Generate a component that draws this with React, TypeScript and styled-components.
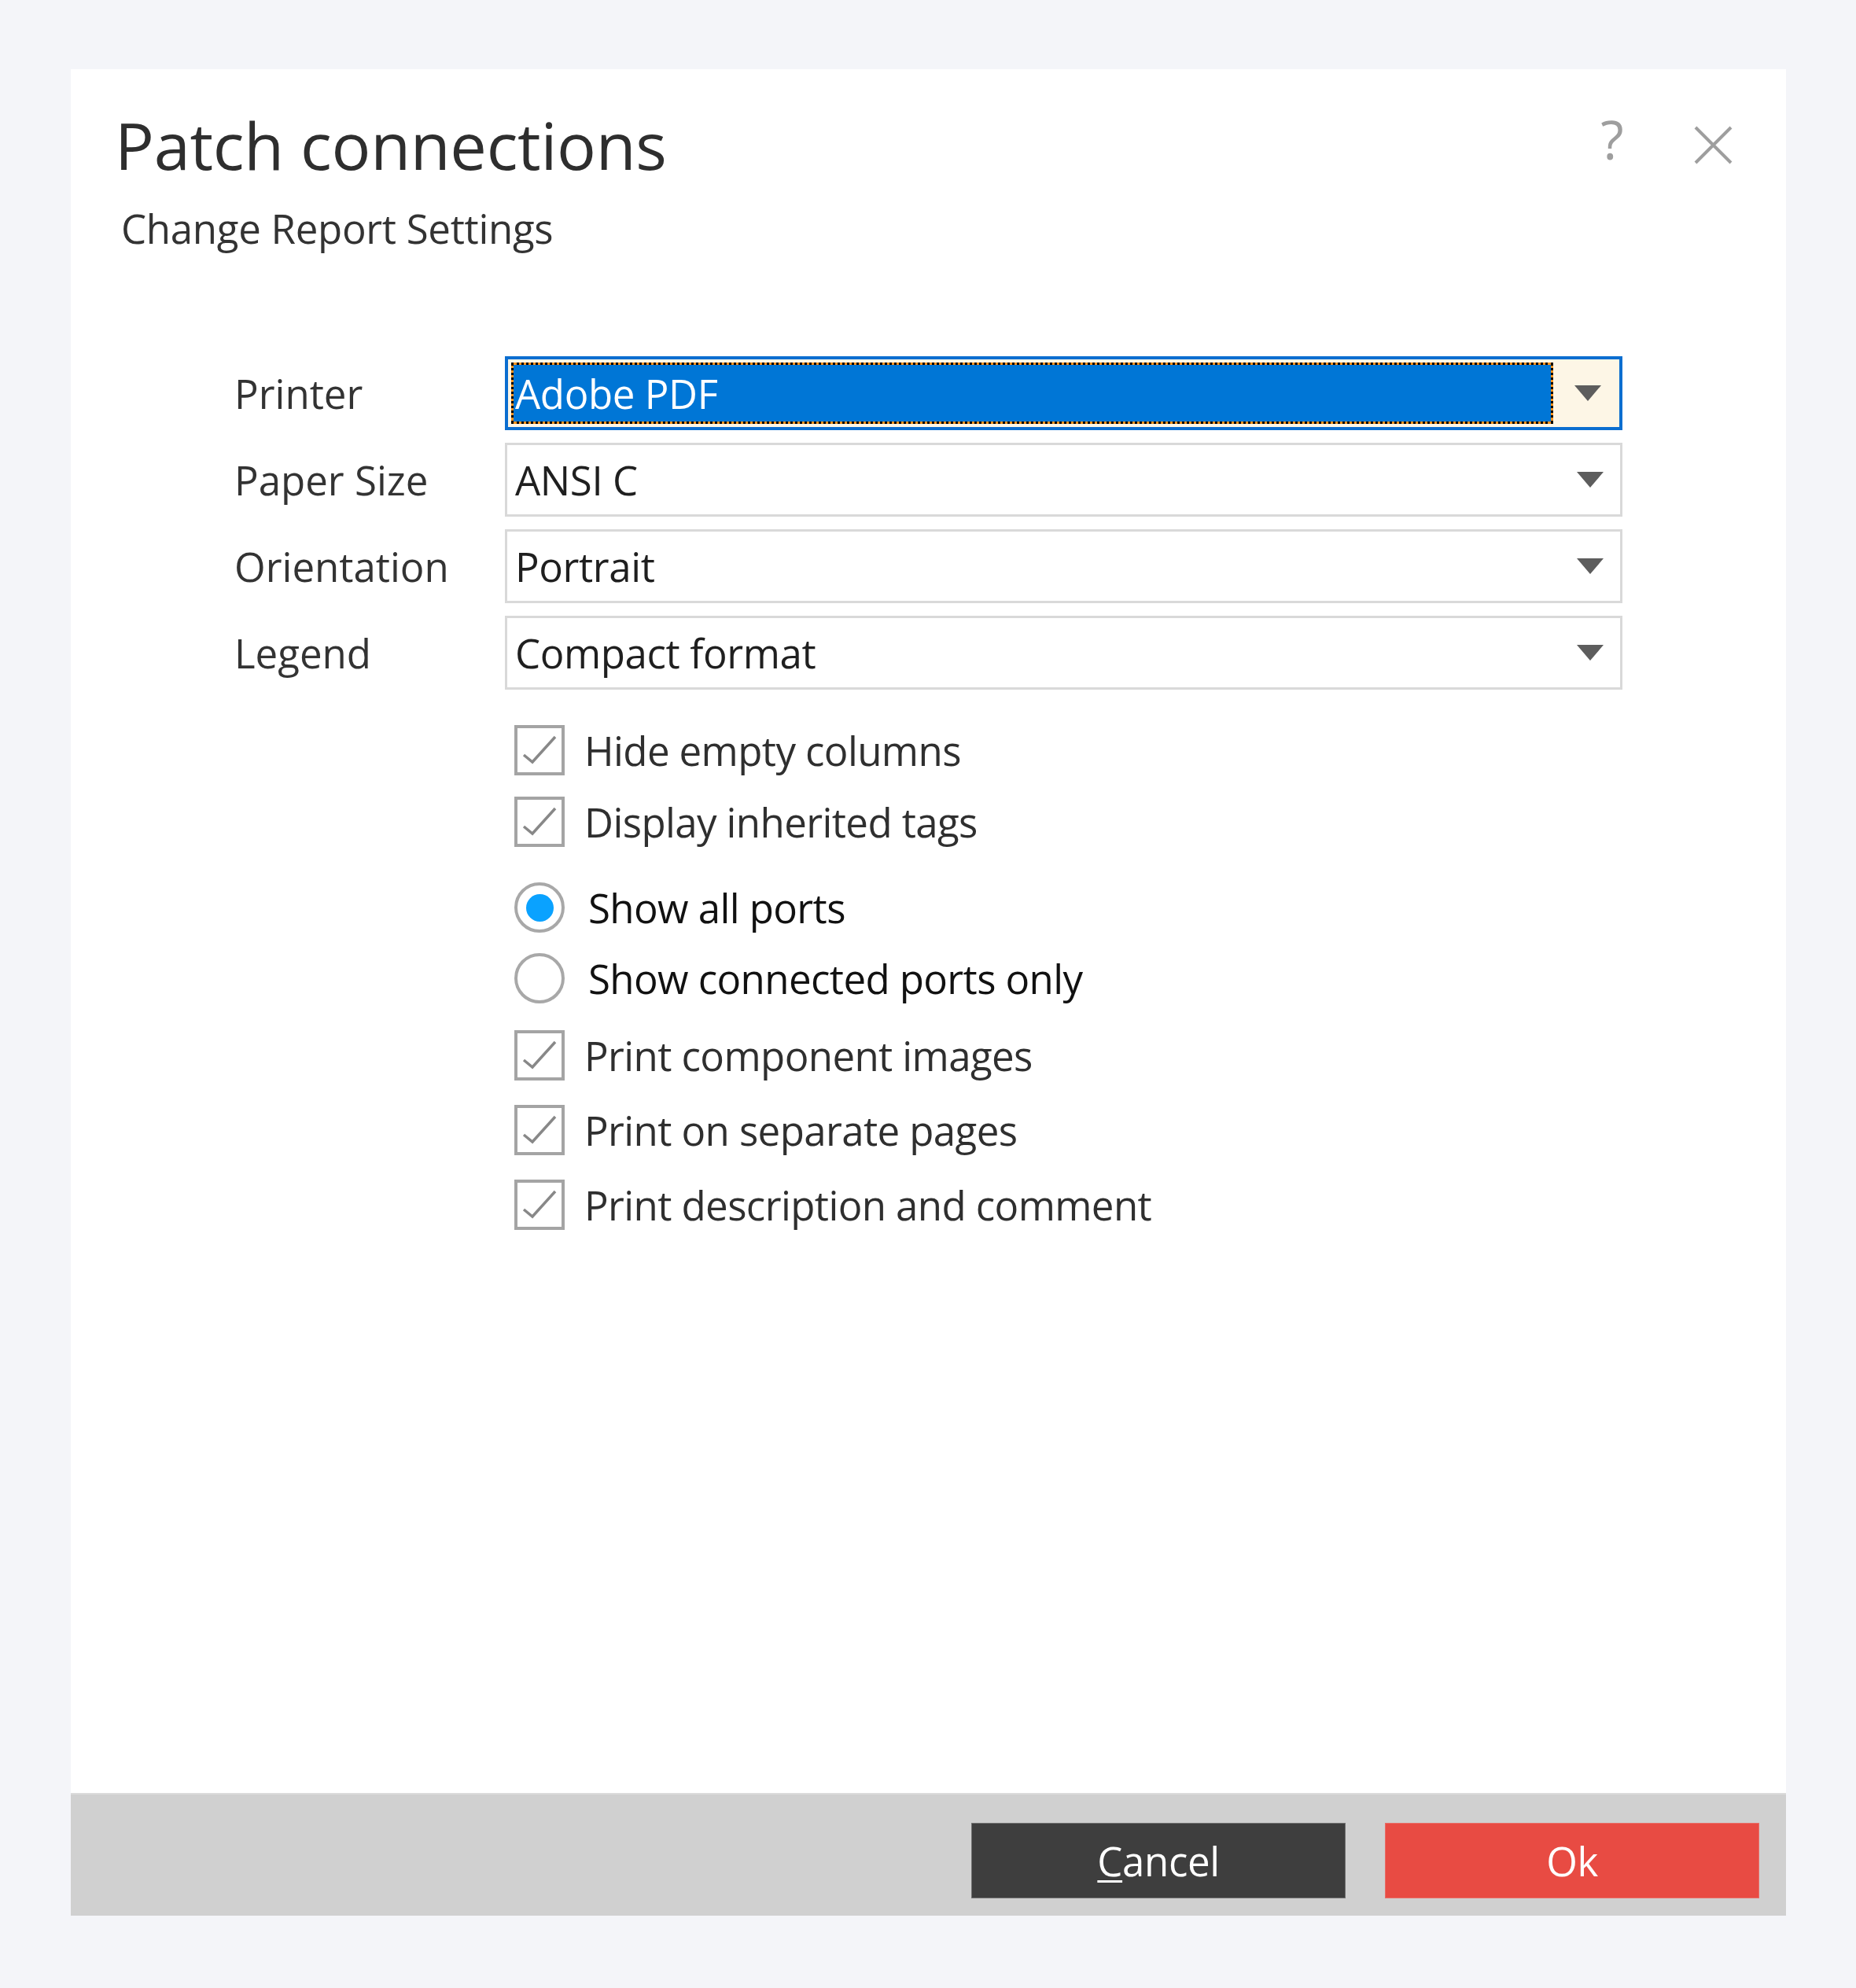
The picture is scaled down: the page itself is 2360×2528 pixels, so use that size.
import { Fragment } from "react";
import styled, { createGlobalStyle } from "styled-components";

type SelectField = {
    label: string;
    value: string;
    focused?: boolean;
};

type OptionItem = {
    kind: "check" | "radio";
    label: string;
    checked: boolean;
};

const fields: SelectField[] = [
    { label: "Printer", value: "Adobe PDF", focused: true },
    { label: "Paper Size", value: "ANSI C" },
    { label: "Orientation", value: "Portrait" },
    { label: "Legend", value: "Compact format" },
];

const optionGroups: { gap: number; top: number; items: OptionItem[] }[] = [
    {
        gap: 27,
        top: 0,
        items: [
            { kind: "check", label: "Hide empty columns", checked: true },
            { kind: "check", label: "Display inherited tags", checked: true },
        ],
    },
    {
        gap: 26,
        top: 45,
        items: [
            { kind: "radio", label: "Show all ports", checked: true },
            { kind: "radio", label: "Show connected ports only", checked: false },
        ],
    },
    {
        gap: 31,
        top: 34,
        items: [
            { kind: "check", label: "Print component images", checked: true },
            { kind: "check", label: "Print on separate pages", checked: true },
            { kind: "check", label: "Print description and comment", checked: true },
        ],
    },
];

const GlobalStyle = createGlobalStyle`
    html, body {
        margin: 0;
        padding: 0;
        background: #f4f5f9;
    }
    body {
        font-family: "Open Sans", "Noto Sans", sans-serif;
        color: #333;
    }
`;

const Page = styled.div`
    box-sizing: border-box;
    width: 2360px;
    height: 2528px;
    padding: 88px 89px 92px 90px;
`;

const Dialog = styled.div`
    display: flex;
    flex-direction: column;
    width: 100%;
    height: 100%;
    background: #ffffff;
`;

const Body = styled.div`
    flex: 1;
    display: flex;
    flex-direction: column;
`;

const Header = styled.div`
    display: flex;
    justify-content: space-between;
    align-items: flex-start;
    padding: 46px 68px 0 56px;
`;

const TitleBlock = styled.div`
    display: flex;
    flex-direction: column;
`;

const Title = styled.h1`
    margin: 0;
    font-size: 83px;
    font-weight: 400;
    line-height: 100px;
    letter-spacing: -0.3px;
    color: #2e2e2e;
`;

const Subtitle = styled.div`
    margin: 24px 0 0 8px;
    font-size: 51px;
    line-height: 64px;
    letter-spacing: -0.3px;
    color: #333;
`;

const HeaderTools = styled.div`
    display: flex;
    align-items: flex-start;
    gap: 74px;
    margin-top: 9px;
`;

const HelpMark = styled.span`
    width: 60px;
    text-align: center;
    font-size: 68px;
    line-height: 68px;
    color: #9e9e9e;
`;

const CloseIcon = styled.svg`
    margin-top: 17px;
    display: block;
`;

const Form = styled.div`
    display: grid;
    grid-template-columns: 344px 1fr;
    row-gap: 16px;
    margin: 131px 208px 0 208px;
`;

const FieldLabel = styled.div`
    align-self: center;
    font-size: 51px;
    line-height: 64px;
    color: #333;
`;

const Select = styled.div<{ $focused?: boolean }>`
    box-sizing: border-box;
    height: 94px;
    display: flex;
    align-items: stretch;
    border: ${(p) => (p.$focused ? "4px solid #0b6ed0" : "3px solid #d9d9d9")};
    background: ${(p) => (p.$focused ? "#fdf6e6" : "#ffffff")};
    padding: ${(p) => (p.$focused ? "4px 0 4px 4px" : "0")};
`;

const SelectValue = styled.div<{ $focused?: boolean }>`
    flex: 1;
    display: flex;
    align-items: center;
    font-size: 51px;
    line-height: 64px;
    letter-spacing: -0.4px;
    color: ${(p) => (p.$focused ? "#ffffff" : "#1f1f1f")};
    padding-left: ${(p) => (p.$focused ? "2px" : "10px")};
    border: ${(p) => (p.$focused ? "3px dotted #000" : "none")};
    background: ${(p) =>
        p.$focused
            ? "linear-gradient(#0076d6, #0076d6) padding-box, linear-gradient(#f7921e, #f7921e) border-box"
            : "transparent"};
`;

const ArrowZone = styled.div<{ $focused?: boolean }>`
    width: ${(p) => (p.$focused ? "84px" : "76px")};
    display: flex;
    align-items: center;
    justify-content: center;
    padding-left: ${(p) => (p.$focused ? "4px" : "0")};
    box-sizing: border-box;
`;

const Options = styled.div`
    grid-column: 2;
    margin-top: 29px;
    padding-left: 12px;
    display: flex;
    flex-direction: column;
`;

const OptionGroup = styled.div<{ $gap: number; $top: number }>`
    display: flex;
    flex-direction: column;
    gap: ${(p) => p.$gap}px;
    margin-top: ${(p) => p.$top}px;
`;

const OptionRow = styled.label<{ $radio?: boolean }>`
    display: flex;
    align-items: center;
    height: 64px;
    gap: ${(p) => (p.$radio ? "30px" : "25px")};
    font-size: 51px;
    line-height: 64px;
    letter-spacing: -0.6px;
    color: ${(p) => (p.$radio ? "#111" : "#2f2f2f")};
`;

const CheckBox = styled.span`
    box-sizing: border-box;
    width: 64px;
    height: 64px;
    flex: none;
    border: 4px solid #a4a4a4;
    background: #fff;
    display: flex;
`;

const Radio = styled.span<{ $on: boolean }>`
    box-sizing: border-box;
    width: 64px;
    height: 64px;
    flex: none;
    border-radius: 50%;
    border: 4px solid #a8a8a8;
    display: flex;
    align-items: center;
    justify-content: center;

    &::after {
        content: "";
        width: 35px;
        height: 35px;
        border-radius: 50%;
        background: ${(p) => (p.$on ? "#0aa2ff" : "transparent")};
    }
`;

const Footer = styled.div`
    box-sizing: border-box;
    height: 156px;
    border-top: 2px solid #dbdbdb;
    background: #d0d0d0;
    padding: 36px 34px 22px;
    display: flex;
    justify-content: flex-end;
    gap: 50px;
`;

const Button = styled.button<{ $variant: "dark" | "danger" }>`
    box-sizing: border-box;
    width: 476px;
    height: 96px;
    border: 1px solid ${(p) => (p.$variant === "dark" ? "#707070" : "#e86d66")};
    background: ${(p) => (p.$variant === "dark" ? "#3e3e3e" : "#e84b43")};
    color: #ffffff;
    font-family: "Open Sans", "Noto Sans", sans-serif;
    font-size: 51px;
    line-height: 64px;
    letter-spacing: -0.4px;
    padding: 0;
    cursor: pointer;
`;

const AccessKey = styled.span`
    text-decoration: underline;
    text-decoration-thickness: 3px;
    text-underline-offset: 5px;
`;

function Arrow() {
    return (
        <svg width="34" height="20" viewBox="0 0 34 20">
            <polygon points="0,0 34,0 17,20" fill="#5d5d5d" />
        </svg>
    );
}

function CheckMark() {
    return (
        <svg width="56" height="56" viewBox="0 0 56 56">
            <polyline
                points="8,34 19,43 48,11"
                fill="none"
                stroke="#888"
                strokeWidth="3.5"
            />
        </svg>
    );
}

function App() {
    return (
        <>
            <GlobalStyle />
            <Page>
                <Dialog>
                    <Body>
                        <Header>
                            <TitleBlock>
                                <Title>Patch connections</Title>
                                <Subtitle>Change Report Settings</Subtitle>
                            </TitleBlock>
                            <HeaderTools>
                                <HelpMark>?</HelpMark>
                                <CloseIcon width="49" height="49" viewBox="0 0 49 49">
                                    <path
                                        d="M2 2 L47 47 M47 2 L2 47"
                                        stroke="#9e9e9e"
                                        strokeWidth="4"
                                    />
                                </CloseIcon>
                            </HeaderTools>
                        </Header>

                        <Form>
                            {fields.map((field) => (
                                <Fragment key={field.label}>
                                    <FieldLabel>{field.label}</FieldLabel>
                                    <Select $focused={field.focused}>
                                        <SelectValue $focused={field.focused}>{field.value}</SelectValue>
                                        <ArrowZone $focused={field.focused}>
                                            <Arrow />
                                        </ArrowZone>
                                    </Select>
                                </Fragment>
                            ))}

                            <Options>
                                {optionGroups.map((group, gi) => (
                                    <OptionGroup key={gi} $gap={group.gap} $top={group.top}>
                                        {group.items.map((item) =>
                                            item.kind === "check" ? (
                                                <OptionRow key={item.label}>
                                                    <CheckBox>{item.checked && <CheckMark />}</CheckBox>
                                                    {item.label}
                                                </OptionRow>
                                            ) : (
                                                <OptionRow key={item.label} $radio>
                                                    <Radio $on={item.checked} />
                                                    {item.label}
                                                </OptionRow>
                                            )
                                        )}
                                    </OptionGroup>
                                ))}
                            </Options>
                        </Form>
                    </Body>

                    <Footer>
                        <Button $variant="dark">
                            <AccessKey>C</AccessKey>ancel
                        </Button>
                        <Button $variant="danger">Ok</Button>
                    </Footer>
                </Dialog>
            </Page>
        </>
    );
}

export default App;
